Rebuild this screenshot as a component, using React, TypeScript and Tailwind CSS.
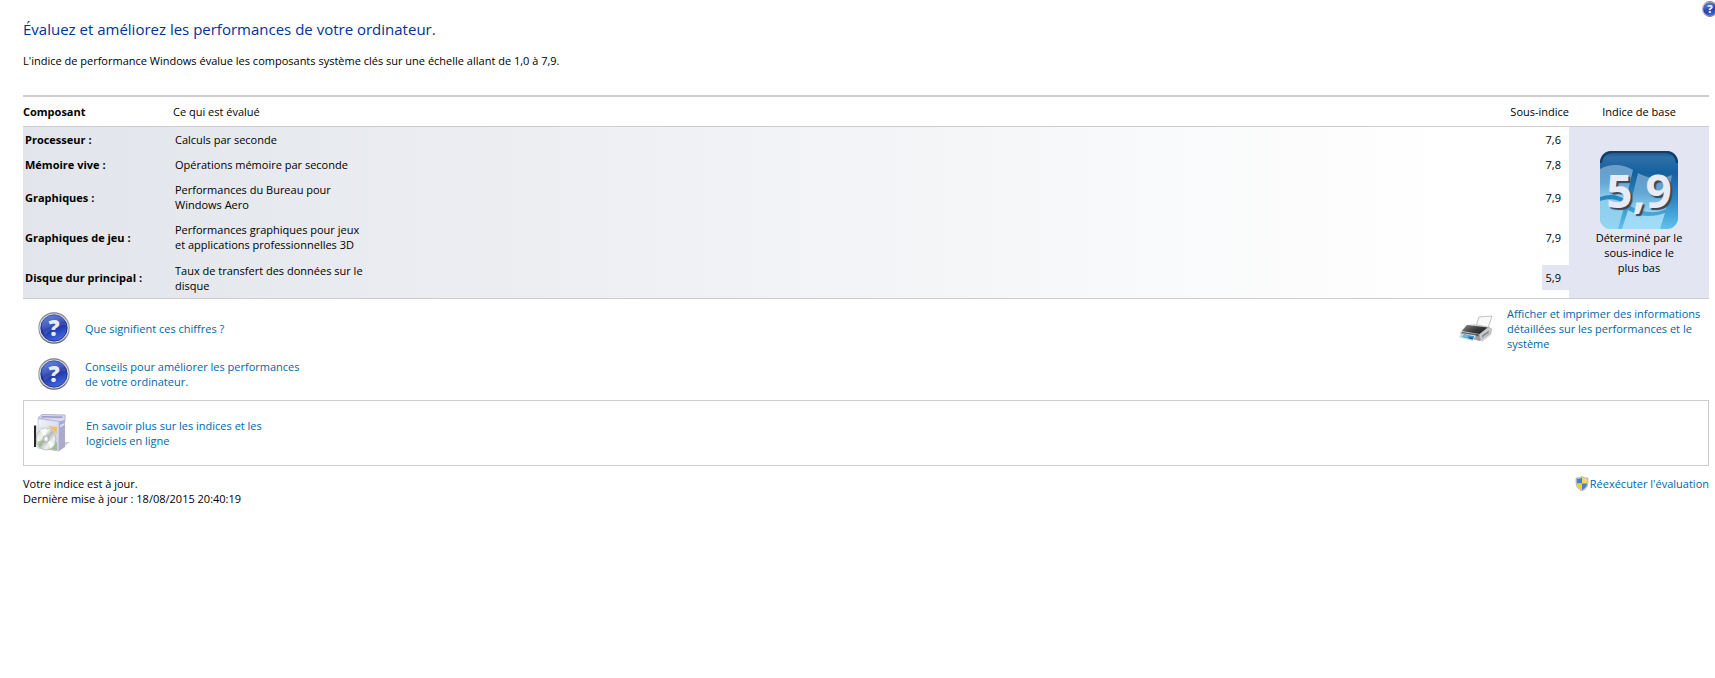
import React from 'react';

interface Row {
  name: string;
  detail: string;
  score: string;
  lowest?: boolean;
}

const rows: Row[] = [
  { name: 'Processeur :', detail: 'Calculs par seconde', score: '7,6' },
  { name: 'Mémoire vive :', detail: 'Opérations mémoire par seconde', score: '7,8' },
  { name: 'Graphiques :', detail: 'Performances du Bureau pour Windows Aero', score: '7,9' },
  {
    name: 'Graphiques de jeu :',
    detail: 'Performances graphiques pour jeux et applications professionnelles 3D',
    score: '7,9',
  },
  {
    name: 'Disque dur principal :',
    detail: 'Taux de transfert des données sur le disque',
    score: '5,9',
    lowest: true,
  },
];

const HelpIcon: React.FC<{ id: string; className: string }> = ({ id, className }) => (
  <svg viewBox="0 0 32 32" className={className} aria-hidden="true">
    <defs>
      <linearGradient id={`${id}-ring`} x1="0" y1="0" x2="0" y2="1">
        <stop offset="0" stopColor="#777b85" />
        <stop offset="0.5" stopColor="#a9acb4" />
        <stop offset="1" stopColor="#5e6066" />
      </linearGradient>
      <linearGradient id={`${id}-fill`} x1="0" y1="0" x2="0.4" y2="1">
        <stop offset="0" stopColor="#5b7bd8" />
        <stop offset="0.45" stopColor="#2a48bb" />
        <stop offset="0.55" stopColor="#1a2f9f" />
        <stop offset="1" stopColor="#3d62dd" />
      </linearGradient>
    </defs>
    <circle cx="16" cy="16" r="15.8" fill={`url(#${id}-ring)`} />
    <circle cx="16" cy="16" r="14.6" fill="#dcdde2" />
    <circle cx="16" cy="16" r="13.2" fill={`url(#${id}-fill)`} stroke="#1c2c83" strokeWidth="0.8" />
    <path d="M4 15A12 12 0 0 1 28 13C21 12 12 18 7 23A12 12 0 0 1 4 15Z" fill="#fff" opacity="0.12" />
    <text
      x="16"
      y="24"
      textAnchor="middle"
      fontFamily="Open Sans, sans-serif"
      fontWeight="800"
      fontSize="22"
      fill="#e9ebf2"
    >
      ?
    </text>
  </svg>
);

const PrinterIcon: React.FC = () => (
  <svg viewBox="0 0 34 28" className="w-[34px] h-[28px] shrink-0" aria-hidden="true">
    <defs>
      <linearGradient id="printer-top" x1="0" y1="0" x2="1" y2="0.6">
        <stop offset="0" stopColor="#8a8a8a" />
        <stop offset="0.6" stopColor="#3c3c3e" />
        <stop offset="1" stopColor="#242426" />
      </linearGradient>
      <linearGradient id="printer-side" x1="0" y1="0" x2="1" y2="1">
        <stop offset="0" stopColor="#f2f2f2" />
        <stop offset="1" stopColor="#77797c" />
      </linearGradient>
    </defs>
    <path d="M20 2L33 1L29 13L17 11Z" fill="#fafafa" stroke="#b0b2b6" strokeWidth="0.8" />
    <path d="M21.5 24.5L33 16L32 20L23 27Z" fill="#000" opacity="0.15" />
    <path d="M7 10L17 9L30 12L33 14L31.5 18.5L21 26L2 21L1 17.5Z" fill="url(#printer-side)" />
    <path d="M8 10L28.5 12.5L20.5 19L3 16Z" fill="url(#printer-top)" />
    <path d="M20.5 19.5L29.5 12.5L32.5 14L31.5 18L21.5 25.5Z" fill="#c6c8ca" />
    <path d="M23 20.5L30 15.5L29.5 18L23 22.5Z" fill="#85878b" />
    <path d="M3 17L20 19.5L19.5 21.5L2.500 18.5Z" fill="#57595d" />
    <path d="M4 18.5L17 20.5L14 25.5L0.5 22Z" fill="#f4f8fb" stroke="#9ba1a7" strokeWidth="0.5" />
    <path d="M5 19.3L15.5 21.3L13.5 24.4L2.5 21.8Z" fill="#3d8fce" />
    <path d="M5 19.3L10 20.3L8 23L2.5 21.8Z" fill="#63bbd3" />
    <path d="M11 22.3L14.5 22.8L13.5 24.4L9.5 23.4Z" fill="#1f5aa0" />
  </svg>
);

const SoftwareIcon: React.FC = () => (
  <svg viewBox="0 0 38 40" className="w-[38px] h-[40px] shrink-0" aria-hidden="true">
    <defs>
      <linearGradient id="box-front" x1="0" y1="0" x2="1" y2="1">
        <stop offset="0" stopColor="#f3f4fb" />
        <stop offset="1" stopColor="#c9cbe4" />
      </linearGradient>
      <linearGradient id="disc" x1="0" y1="0" x2="1" y2="1">
        <stop offset="0" stopColor="#c4d9bb" />
        <stop offset="0.35" stopColor="#f3f3f0" />
        <stop offset="0.5" stopColor="#b5b9b7" />
        <stop offset="0.7" stopColor="#eef1ee" />
        <stop offset="1" stopColor="#a8c98f" />
      </linearGradient>
    </defs>
    <path d="M27 37L37 29L32 29L27 31Z" fill="#000" opacity="0.18" />
    <path d="M5 5L9 1.500L32 2L32 8L28 9Z" fill="#d9d9f1" stroke="#a3a2c6" strokeWidth="0.8" />
    <path d="M9 3L30 3.500L29 5L8 4.5Z" fill="#9b99c6" />
    <path d="M5 6L26 8.5L26 38L5 35Z" fill="url(#box-front)" stroke="#b9bbd3" strokeWidth="0.7" />
    <path d="M26 8.5L32 7L32 34L26 38Z" fill="#a9aacd" />
    <path d="M27 12L31.500 10V12L27 14.5Z" fill="#dcdcf1" />
    <path d="M15 13L24 14V21L20 17Z" fill="#eebd70" />
    <path d="M15 32L24 29V37.500L15 36Z" fill="#a1ba9b" />
    <path d="M1 12.5H3.200V34H1Z" fill="#252629" />
    <path d="M3.200 13L12 14V36L3.200 34Z" fill="#e0e4e4" opacity="0.7" />
    <ellipse cx="13" cy="26" rx="9.8" ry="11" fill="url(#disc)" stroke="#a5aaa7" strokeWidth="0.6" />
    <path d="M13 26L7 17L13 15Z" fill="#fff" opacity="0.8" />
    <path d="M13 26L18 36L22 31Z" fill="#fff" opacity="0.7" />
    <path d="M13 26L4 29L7 34Z" fill="#8cbb70" opacity="0.6" />
    <ellipse cx="13" cy="26" rx="3" ry="3.4" fill="#dadddd" stroke="#929695" strokeWidth="0.6" />
    <ellipse cx="13" cy="26" rx="1.2" ry="1.4" fill="#fff" />
  </svg>
);

const ShieldIcon: React.FC = () => (
  <svg viewBox="0 0 14 16" className="w-[14px] h-[15px] shrink-0" aria-hidden="true">
    <defs>
      <clipPath id="shield-clip">
        <path d="M7 1.500C5.500 2.700 3.500 3 1.500 3V7.500C1.500 11 4 13.500 7 15C10 13.500 12.500 11 12.500 7.500V3C10.500 3 8.500 2.700 7 1.500Z" />
      </clipPath>
    </defs>
    <path
      d="M7 .5C5.500 1.800 3 2.200 .7 2.200V7.500C.7 11.500 3.500 14.300 7 15.800C10.500 14.300 13.300 11.500 13.300 7.500V2.200C11 2.200 8.500 1.800 7 .5Z"
      fill="#d4d8dc"
      stroke="#85898f"
      strokeWidth="0.6"
    />
    <g clipPath="url(#shield-clip)">
      <path d="M0 0H7V8H0Z" fill="#3b85cf" />
      <path d="M7 0H14V8H7Z" fill="#f9d94c" />
      <path d="M0 8H7V16H0Z" fill="#f7cc38" />
      <path d="M7 8H14V16H7Z" fill="#3c85cf" />
    </g>
  </svg>
);

const ScoreTile: React.FC = () => (
  <div className="grid w-[78px] h-[78px] mx-auto">
    <svg viewBox="0 0 78 78" className="col-start-1 row-start-1 w-full h-full" aria-hidden="true">
      <defs>
        <linearGradient id="tile-bg" x1="0" y1="0" x2="0" y2="1">
          <stop offset="0" stopColor="#1c5080" />
          <stop offset="0.08" stopColor="#2f6fa8" />
          <stop offset="0.28" stopColor="#14619f" />
          <stop offset="0.6" stopColor="#2786bd" />
          <stop offset="1" stopColor="#62c1ec" />
        </linearGradient>
        <linearGradient id="tile-pane" x1="0" y1="0" x2="0" y2="1">
          <stop offset="0" stopColor="#7ba6cd" />
          <stop offset="0.5" stopColor="#71b1dc" />
          <stop offset="1" stopColor="#a9dffa" />
        </linearGradient>
        <clipPath id="tile-clip">
          <rect width="78" height="78" rx="11" />
        </clipPath>
      </defs>
      <g clipPath="url(#tile-clip)">
        <rect width="78" height="78" fill="url(#tile-bg)" />
        <path d="M0 18C9 13 22 12 33 19L26 49C17 43 9 43 0 46Z" fill="url(#tile-pane)" opacity="0.85" />
        <path d="M38 22C49 28 60 29 72 24L66 58C54 64 41 61 30 55Z" fill="url(#tile-pane)" opacity="0.8" />
        <path d="M0 50C9 47 18 48 25 53L18 78H0Z" fill="#9fd8f5" opacity="0.85" />
        <path d="M28 59C41 67 54 66 65 62L60 78H22Z" fill="#b3e5fb" opacity="0.8" />
      </g>
      <path d="M1 12A11 11 0 0 1 12 1H66A11 11 0 0 1 77 12" fill="none" stroke="#103d68" strokeWidth="2" />
    </svg>
    <span className="col-start-1 row-start-1 z-10 self-center text-center text-[46px] leading-[78px] font-bold text-[#e8ebf6] [text-shadow:2px_2px_1px_#3d4652]">
      5,9
    </span>
  </div>
);

const linkClass = 'text-[#0066aa] hover:underline';

export default function App() {
  return (
    <main className="relative overflow-x-hidden bg-white pl-[23px] pr-[6px] pt-[17px] pb-8 font-['Open_Sans',sans-serif] text-[11px] leading-[15px] text-black">
      <button type="button" aria-label="Aide" className="absolute top-px -right-[3px]">
        <HelpIcon id="help-top" className="w-4 h-4" />
      </button>

      <h1 className="text-[15px] leading-6 text-[#003399]">
        Évaluez et améliorez les performances de votre ordinateur.
      </h1>
      <p className="mt-3">
        L'indice de performance Windows évalue les composants système clés sur une échelle allant de 1,0 à 7,9.
      </p>

      {/* Scores */}
      <table className="mt-[27px] w-full table-fixed border-separate border-spacing-0 border-t-2 border-[#cccccc]">
        <thead>
          <tr>
            <th scope="col" className="w-[150px] h-[30px] border-b border-[#cccccc] text-left font-bold">
              Composant
            </th>
            <th scope="col" className="border-b border-[#cccccc] text-left font-normal">
              Ce qui est évalué
            </th>
            <th scope="col" className="w-[100px] border-b border-[#cccccc] text-right font-normal">
              Sous-indice
            </th>
            <th scope="col" className="w-[140px] border-b border-[#cccccc] text-center font-normal">
              Indice de base
            </th>
          </tr>
        </thead>
        <tbody className="bg-linear-to-r from-[#e2e5eb] to-white to-85%">
          {rows.map((row, i) => (
            <tr key={row.name} className="last:h-[41px]">
              <th scope="row" className="px-[2px] py-[5px] text-left font-bold">
                {row.name}
              </th>
              <td className="px-[2px] py-[5px]">
                <div className="max-w-[194px]">{row.detail}</div>
              </td>
              <td className="text-right">
                <span className={row.lowest ? 'inline-block bg-[#e3e6f2] py-[5px] pl-1 pr-2' : 'inline-block pr-2'}>
                  {row.score}
                </span>
              </td>
              {i === 0 && (
                <td rowSpan={rows.length} className="bg-[#e3e6f2] text-center">
                  <ScoreTile />
                  <p className="mx-auto mt-px max-w-[90px]">Déterminé par le sous-indice le plus bas</p>
                </td>
              )}
            </tr>
          ))}
        </tbody>
      </table>

      {/* Help and print links */}
      <div className="flex justify-between border-t border-[#cccccc] pb-[10px]">
        <ul className="flex flex-col gap-[14px] pl-[15px] pt-[13px]">
          <li className="flex items-center gap-[15px]">
            <HelpIcon id="help-scores" className="w-8 h-8 shrink-0" />
            <a href="#chiffres" className={linkClass}>
              Que signifient ces chiffres ?
            </a>
          </li>
          <li className="flex items-center gap-[15px]">
            <HelpIcon id="help-tips" className="w-8 h-8 shrink-0" />
            <a href="#conseils" className={`${linkClass} max-w-[230px]`}>
              Conseils pour améliorer les performances de votre ordinateur.
            </a>
          </li>
        </ul>
        <div className="flex items-start gap-[14px] pt-[7px]">
          <div className="pt-[9px]">
            <PrinterIcon />
          </div>
          <a href="#imprimer" className={`${linkClass} w-[202px]`}>
            Afficher et imprimer des informations détaillées sur les performances et le système
          </a>
        </div>
      </div>

      <section className="flex items-start gap-[15px] border border-[#cccccc] pl-[9px] py-3">
        <SoftwareIcon />
        <a href="#en-ligne" className={`${linkClass} mt-[5px] max-w-[190px]`}>
          En savoir plus sur les indices et les logiciels en ligne
        </a>
      </section>

      <footer className="mt-[10px] flex items-start justify-between">
        <div>
          <p>Votre indice est à jour.</p>
          <p>Dernière mise à jour : 18/08/2015 20:40:19</p>
        </div>
        <a href="#reexecuter" className={`${linkClass} flex items-center gap-px`}>
          <ShieldIcon />
          Réexécuter l'évaluation
        </a>
      </footer>
    </main>
  );
}
